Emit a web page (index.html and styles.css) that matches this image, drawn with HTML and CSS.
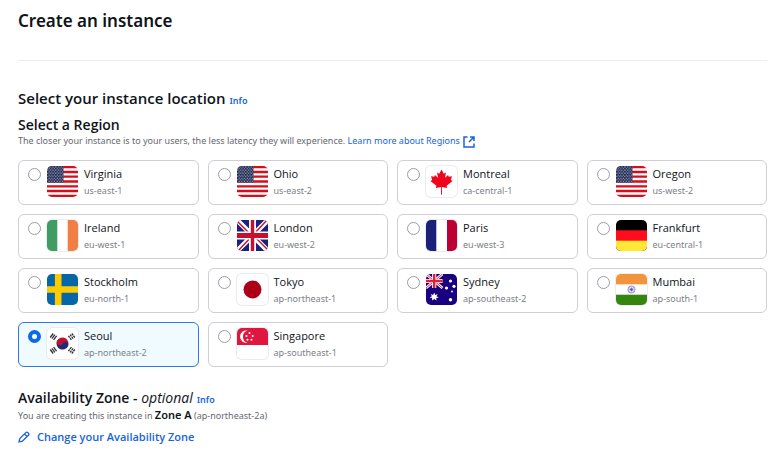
FILE: index.html
```html
<!DOCTYPE html>
<html lang="en">
  <head>
    <meta charset="UTF-8" />
    <meta name="viewport" content="width=device-width, initial-scale=1.0" />
    <title>Create an instance</title>

    <link rel="stylesheet" href="styles.css">
  </head>
  <body>
    <!-- shared flag drawings -->
    <svg class="defs" width="0" height="0" aria-hidden="true">
      <defs>
        <pattern id="stars" width="2.7" height="3.2" patternUnits="userSpaceOnUse">
          <circle cx="0.8" cy="0.9" r="0.6" fill="#fff" />
          <circle cx="2.1" cy="2.5" r="0.6" fill="#fff" />
        </pattern>
        <symbol id="flag-us" viewBox="0 0 31 31">
          <rect width="31" height="31" fill="#fff" />
          <path d="M0 1.2h31M0 6h31M0 10.7h31M0 15.5h31M0 20.3h31M0 25h31M0 29.8h31" stroke="#d80d1c" stroke-width="2.3" />
          <rect width="16.5" height="16.6" fill="#18224f" />
          <rect width="16.5" height="16.6" fill="url(#stars)" opacity="0.8" />
        </symbol>
        <symbol id="flag-uk" viewBox="0 0 31 31">
          <rect width="31" height="31" fill="#1a237b" />
          <path d="M0 0l31 31M31 0L0 31" stroke="#fff" stroke-width="5" />
          <path d="M-1 0l16 16M32 31L16 15M31 -1L16 15M0 32L15 16" stroke="#cf1430" stroke-width="1.5" />
          <path d="M15.5 0v31" stroke="#fff" stroke-width="7" />
          <path d="M0 15.5h31" stroke="#fff" stroke-width="8" />
          <path d="M15.5 0v31" stroke="#c8102e" stroke-width="3.4" />
          <path d="M0 15.5h31" stroke="#c8102e" stroke-width="5" />
        </symbol>
      </defs>
    </svg>

    <header class="header">
      <h1>Create an instance</h1>
    </header>

    <main>
      <div class="heading">
        <h2>Select your instance location</h2>
        <a class="info" href="#">Info</a>
      </div>

      <h3 id="region-title">Select a Region</h3>
      <p class="desc">
        The closer your instance is to your users, the less latency they will experience.
        <a class="learn" href="#">Learn more about Regions
          <svg class="ext" viewBox="0 0 12 12"><path d="M4.5 1H1v10h10V7.5M7 1h4v4M11 1L6 6" /></svg></a>
      </p>

      <div class="regions" role="radiogroup" aria-labelledby="region-title">
        <label class="card">
          <input type="radio" name="region" value="us-east-1" />
          <svg class="flag"><use href="#flag-us" /></svg>
          <span class="text"><span class="name">Virginia</span><span class="code">us-east-1</span></span>
        </label>
        <label class="card">
          <input type="radio" name="region" value="us-east-2" />
          <svg class="flag"><use href="#flag-us" /></svg>
          <span class="text"><span class="name">Ohio</span><span class="code">us-east-2</span></span>
        </label>
        <label class="card">
          <input type="radio" name="region" value="ca-central-1" />
          <svg class="flag light" viewBox="0 0 31 31">
            <path d="M15.5 3.5l2.3 4.2 2.2-1.1-1 5.2 3.1-2.9.7 1.8 3.2-.5-1.2 3.8 1.8 1-6 4.8.6 2.1-5.3-.8.1 7.4h-1l.1-7.4-5.3.8.6-2.1-6-4.8 1.8-1L5 10.2l3.2.5.7-1.8 3.1 2.9-1-5.2 2.2 1.1z" fill="#f0061c" />
          </svg>
          <span class="text"><span class="name">Montreal</span><span class="code">ca-central-1</span></span>
        </label>
        <label class="card">
          <input type="radio" name="region" value="us-west-2" />
          <svg class="flag"><use href="#flag-us" /></svg>
          <span class="text"><span class="name">Oregon</span><span class="code">us-west-2</span></span>
        </label>
        <label class="card">
          <input type="radio" name="region" value="eu-west-1" />
          <svg class="flag light" viewBox="0 0 31 31">
            <rect width="10.3" height="31" fill="#3f9c63" />
            <rect x="20.7" width="10.3" height="31" fill="#f17e45" />
          </svg>
          <span class="text"><span class="name">Ireland</span><span class="code">eu-west-1</span></span>
        </label>
        <label class="card">
          <input type="radio" name="region" value="eu-west-2" />
          <svg class="flag"><use href="#flag-uk" /></svg>
          <span class="text"><span class="name">London</span><span class="code">eu-west-2</span></span>
        </label>
        <label class="card">
          <input type="radio" name="region" value="eu-west-3" />
          <svg class="flag light" viewBox="0 0 31 31">
            <rect width="10.3" height="31" fill="#1b2079" />
            <rect x="21" width="10" height="31" fill="#bd0034" />
          </svg>
          <span class="text"><span class="name">Paris</span><span class="code">eu-west-3</span></span>
        </label>
        <label class="card">
          <input type="radio" name="region" value="eu-central-1" />
          <svg class="flag" viewBox="0 0 31 31">
            <rect width="31" height="31" fill="#000" />
            <rect y="10.3" width="31" height="20.7" fill="#ff0d1d" />
            <rect y="20.7" width="31" height="10.3" fill="#ffe834" />
          </svg>
          <span class="text"><span class="name">Frankfurt</span><span class="code">eu-central-1</span></span>
        </label>
        <label class="card">
          <input type="radio" name="region" value="eu-north-1" />
          <svg class="flag" viewBox="0 0 31 31">
            <rect width="31" height="31" fill="#0567a8" />
            <path d="M11.2 0v31M0 15.5h31" stroke="#fecb00" stroke-width="6.6" />
          </svg>
          <span class="text"><span class="name">Stockholm</span><span class="code">eu-north-1</span></span>
        </label>
        <label class="card">
          <input type="radio" name="region" value="ap-northeast-1" />
          <svg class="flag light" viewBox="0 0 31 31">
            <circle cx="15.5" cy="15.5" r="9" fill="#ad0017" />
          </svg>
          <span class="text"><span class="name">Tokyo</span><span class="code">ap-northeast-1</span></span>
        </label>
        <label class="card">
          <input type="radio" name="region" value="ap-southeast-2" />
          <svg class="flag" viewBox="0 0 31 31">
            <rect width="31" height="31" fill="#19007f" />
            <path d="M0 0l16.5 14M16.5 0L0 14" stroke="#fff" stroke-width="2.8" />
            <path d="M0 0l16.5 14M16.5 0L0 14" stroke="#ea1c35" stroke-width="1" />
            <path d="M8.2 0v14M0 7h16.5" stroke="#fff" stroke-width="4.2" />
            <path d="M8.2 0v14M0 7h16.5" stroke="#ea1c35" stroke-width="2.4" />
            <path d="M8.2 18.5l1 2.4 2.5-.9-1.2 2.3 2.3 1.2-2.6.5.3 2.6-2.3-1.7-2.2 1.7.2-2.6-2.6-.5 2.3-1.2-1.2-2.3 2.5.9z" fill="#fff" />
            <g fill="#fff">
              <circle cx="24.5" cy="7" r="1.6" />
              <circle cx="20.5" cy="14" r="1.6" />
              <circle cx="28" cy="12.3" r="1.6" />
              <circle cx="26" cy="17.5" r="0.9" />
              <circle cx="24.5" cy="25.7" r="1.7" />
            </g>
          </svg>
          <span class="text"><span class="name">Sydney</span><span class="code">ap-southeast-2</span></span>
        </label>
        <label class="card">
          <input type="radio" name="region" value="ap-south-1" />
          <svg class="flag light" viewBox="0 0 31 31">
            <rect width="31" height="10.3" fill="#f1943b" />
            <rect y="20.7" width="31" height="10.3" fill="#35850e" />
            <circle cx="15.5" cy="15.5" r="3.6" fill="#e4e2f3" stroke="#8780c0" stroke-width="0.8" />
            <path d="M15.5 12v7M12 15.5h7M13 13l5 5M18 13l-5 5" stroke="#a49fd0" stroke-width="0.5" />
            <circle cx="15.5" cy="15.5" r="1.3" fill="#5a50aa" />
          </svg>
          <span class="text"><span class="name">Mumbai</span><span class="code">ap-south-1</span></span>
        </label>
        <label class="card">
          <input type="radio" name="region" value="ap-northeast-2" checked />
          <svg class="flag light" viewBox="0 0 31 31">
            <g transform="rotate(26 15.5 15.5)">
              <path d="M9.5 15.5a6 6 0 0 1 12 0z" fill="#c3102f" />
              <path d="M9.5 15.5a6 6 0 0 0 12 0z" fill="#1f2c78" />
              <circle cx="12.5" cy="15.5" r="3" fill="#c3102f" />
              <circle cx="18.5" cy="15.5" r="3" fill="#1f2c78" />
            </g>
            <g stroke="#333" stroke-width="1.3">
              <path d="M3.2 9.5l3-4M4.9 10.7l3-4M6.6 11.9l3-4" />
              <path d="M24.8 25.5l3-4M23.1 24.3l3-4M21.4 23.1l3-4" stroke-dasharray="2.2 0.6" />
              <path d="M27.8 9.5l-3-4M26.1 10.7l-3-4M24.4 11.9l-3-4" stroke-dasharray="2.2 0.6" />
              <path d="M6.2 25.5l-3-4M7.9 24.3l-3-4M9.6 23.1l-3-4" />
            </g>
          </svg>
          <span class="text"><span class="name">Seoul</span><span class="code">ap-northeast-2</span></span>
        </label>
        <label class="card">
          <input type="radio" name="region" value="ap-southeast-1" />
          <svg class="flag light" viewBox="0 0 31 31">
            <rect width="31" height="17" fill="#df1740" />
            <path d="M10.5 2.5a6.3 6.3 0 1 0 0 12.4a6.5 6.5 0 0 1 0-12.4z" fill="#fff" />
            <g fill="#fff">
              <circle cx="12.5" cy="5" r="1" />
              <circle cx="9.5" cy="8" r="1" />
              <circle cx="15.7" cy="8" r="1" />
              <circle cx="10.5" cy="11.7" r="1" />
              <circle cx="14.5" cy="11.7" r="1" />
            </g>
          </svg>
          <span class="text"><span class="name">Singapore</span><span class="code">ap-southeast-1</span></span>
        </label>
      </div>

      <div class="heading zone">
        <h3>Availability Zone - <em>optional</em></h3>
        <a class="info" href="#">Info</a>
      </div>
      <p class="desc">You are creating this instance in <strong>Zone A</strong> (ap-northeast-2a)</p>
      <button class="btn_zone" type="button">
        <svg class="pen" viewBox="0 0 12 12"><path d="M1 11l.8-3.4 6-6q1-1 2 0l.6.6q1 1 0 2l-6 6zM6.5 3l2.5 2.5" /></svg>
        Change your Availability Zone
      </button>
    </main>
  </body>
</html>
```

FILE: styles.css
```css
* {
  box-sizing: border-box;
}
body {
  margin: 0;
  padding: 9px 13px 9px 18px;
  font-family: "Noto Sans", "Open Sans", sans-serif;
  font-size: 9px;
  color: #0f141a;
  background-color: white;
}
.defs {
  position: absolute;
}
h1,
h2,
h3,
p {
  margin: 0;
}
h1 {
  font-size: 17px;
  font-weight: 600;
  line-height: 24px;
}
h2,
h3,
.name,
.btn_zone {
  font-family: "Open Sans", "Noto Sans", sans-serif;
}
h2 {
  font-size: 15px;
  font-weight: 600;
  line-height: 20px;
}
h3 {
  font-size: 14px;
  font-weight: 600;
  line-height: 18px;
}
h3 em {
  font-weight: 400;
}
a {
  color: #1763de;
  text-decoration: none;
}
.header {
  padding-bottom: 27px;
  margin-bottom: 27px;
  border-bottom: 1px solid #ebebf0;
}
.heading {
  display: flex;
  align-items: baseline;
  gap: 4px;
  margin-bottom: 8px;
}
.info {
  font-size: 9px;
  font-weight: 600;
}
.desc {
  font-size: 9px;
  line-height: 14px;
  color: #656871;
}
.desc strong {
  font-size: 11px;
  font-weight: 600;
  color: #0f141a;
}
.ext {
  width: 12px;
  height: 12px;
  margin-left: 1px;
  vertical-align: middle;
  fill: none;
  stroke: #1763de;
  stroke-width: 1.5;
}
.regions {
  display: grid;
  grid-template-columns: repeat(4, 1fr);
  gap: 9px;
  margin: 12px 0 22px;
}
.card {
  display: flex;
  align-items: flex-start;
  gap: 6px;
  padding: 5px 9px;
  border: 1px solid #cfcfd4;
  border-radius: 6px;
}
.card:has(input:checked) {
  border-color: #2f76e8;
  background-color: #f0fbff;
}
.card input {
  appearance: none;
  width: 13px;
  height: 13px;
  margin: 2px 0 0;
  border: 1px solid #9a9da5;
  border-radius: 50%;
  background-color: white;
}
.card input:checked {
  border: 4px solid #0b6ae6;
}
.flag {
  width: 31px;
  height: 31px;
  border-radius: 5px;
  background-color: white;
}
.light {
  box-shadow: 0 0 0 1px #ebebf0;
}
.text {
  display: flex;
  flex-direction: column;
}
.name {
  font-size: 11px;
  line-height: 16px;
}
.code {
  font-size: 9px;
  line-height: 17px;
  color: #7d808a;
}
.zone {
  margin-bottom: 1px;
}
.btn_zone {
  display: flex;
  align-items: center;
  gap: 7px;
  margin-top: 6px;
  padding: 0;
  border: none;
  background: none;
  font-size: 11px;
  font-weight: 600;
  line-height: 16px;
  color: #1763de;
}
.pen {
  width: 12px;
  height: 12px;
  fill: none;
  stroke: #1763de;
  stroke-width: 1.3;
}
```
